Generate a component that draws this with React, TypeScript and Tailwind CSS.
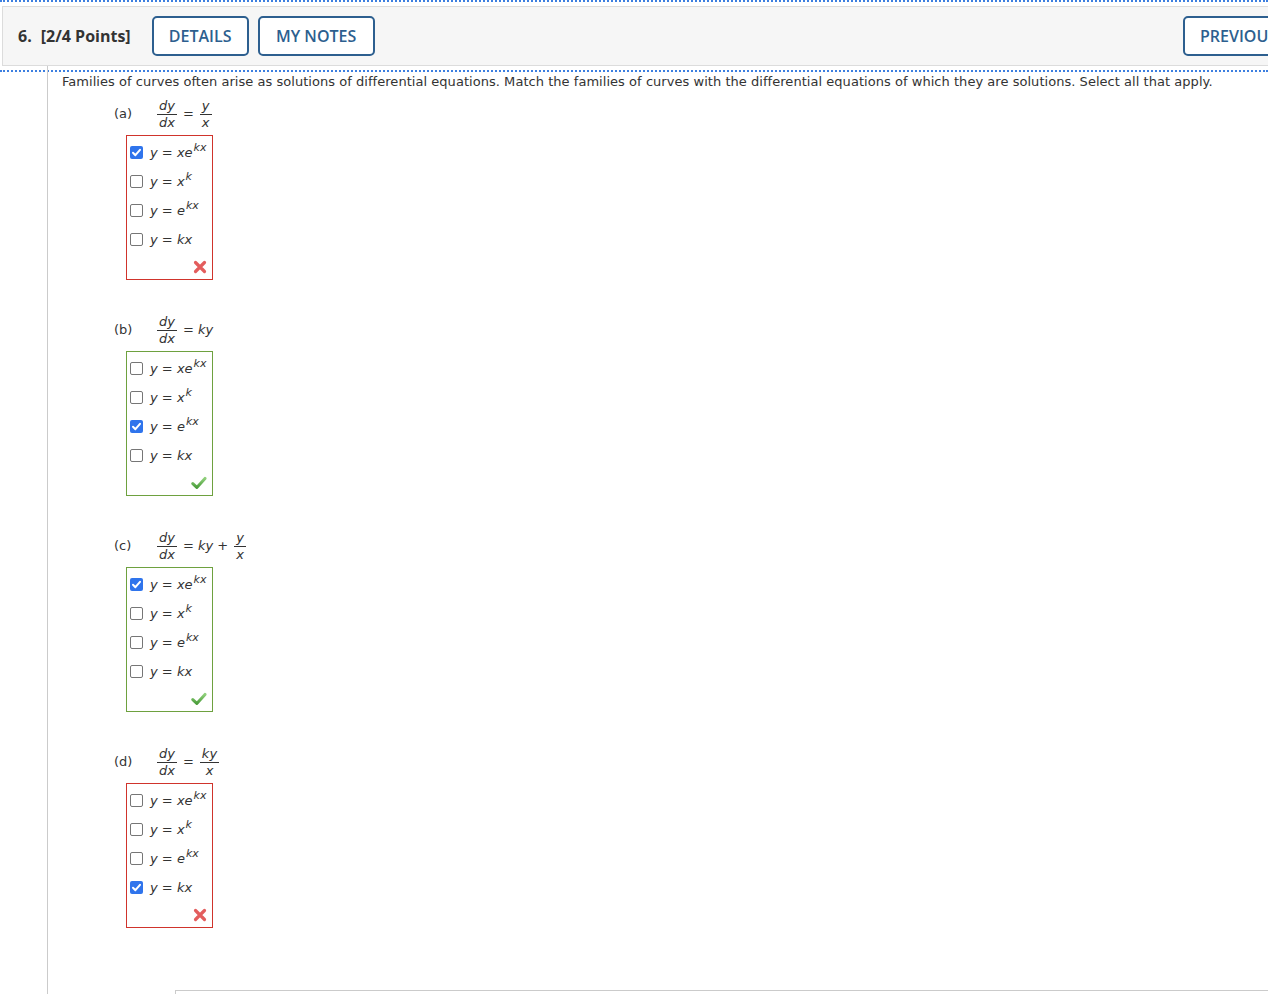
import React from "react";

const mathFont = { fontFamily: '"DejaVu Sans", Verdana, sans-serif' };

function Checkbox({ checked }: { checked: boolean }) {
  if (checked) {
    return (
      <div className="w-[13px] h-[13px] rounded-[2px] bg-[#2f74ec] flex items-center justify-center shrink-0">
        <svg width="11" height="11" viewBox="0 0 11 11">
          <path d="M2 5.8 L4.4 8.2 L9 2.8" stroke="white" strokeWidth="2" fill="none" strokeLinecap="round" strokeLinejoin="round" />
        </svg>
      </div>
    );
  }
  return <div className="w-[13px] h-[13px] rounded-[2px] border border-[#767676] bg-white shrink-0" />;
}

function V({ children }: { children: React.ReactNode }) {
  return <span className="italic">{children}</span>;
}

function Sup({ children }: { children: React.ReactNode }) {
  return <span className="italic text-[11px] relative top-[-6px] ml-[1px]">{children}</span>;
}

const options: React.ReactNode[] = [
  <>
    <V>y</V> = <V>xe</V>
    <Sup>kx</Sup>
  </>,
  <>
    <V>y</V> = <V>x</V>
    <Sup>k</Sup>
  </>,
  <>
    <V>y</V> = <V>e</V>
    <Sup>kx</Sup>
  </>,
  <>
    <V>y</V> = <V>kx</V>
  </>,
];

function Frac({ num, den }: { num: React.ReactNode; den: React.ReactNode }) {
  return (
    <span className="inline-flex flex-col items-center text-[13px] leading-[14px] italic">
      <span className="border-b border-[#333] px-[2px] pb-[1px]">{num}</span>
      <span className="px-[2px] pt-[1px]">{den}</span>
    </span>
  );
}

function Cross() {
  return (
    <svg width="14" height="14" viewBox="0 0 14 14">
      <path d="M2.5 2.5 L11.5 11.5 M11.5 2.5 L2.5 11.5" stroke="#e35d5d" strokeWidth="3.2" strokeLinecap="round" />
    </svg>
  );
}

function Tick() {
  return (
    <svg width="16" height="14" viewBox="0 0 16 14">
      <defs>
        <linearGradient id="g" x1="0" y1="0" x2="0" y2="1">
          <stop offset="0" stopColor="#8fcf7a" />
          <stop offset="1" stopColor="#4c9e3c" />
        </linearGradient>
      </defs>
      <path d="M1.8 7.6 L5.8 11.4 L14 2.4" stroke="url(#g)" strokeWidth="3" fill="none" strokeLinecap="round" strokeLinejoin="round" />
    </svg>
  );
}

function Part({
  label,
  eq,
  checked,
  correct,
}: {
  label: string;
  eq: React.ReactNode;
  checked: number[];
  correct: boolean;
}) {
  return (
    <div className="h-[216px]">
      <div className="h-[34px] flex items-center text-[13px] text-[#333]" style={mathFont}>
        <span className="w-[43px] ml-[52px] not-italic">{label}</span>
        {eq}
      </div>
      <div
        className={
          "mt-[4px] ml-[64px] w-[87px] h-[145px] border flex flex-col " +
          (correct ? "border-[#6ea13f]" : "border-[#d0342c]")
        }
      >
        <div className="pt-[2px]">
          {options.map((o, i) => (
            <div key={i} className="h-[29px] flex items-center pl-[3px]">
              <Checkbox checked={checked.includes(i)} />
              <span className="ml-[7px] text-[13px] text-[#333] whitespace-nowrap" style={mathFont}>
                {o}
              </span>
            </div>
          ))}
        </div>
        <div className="flex-1 flex items-center justify-end pr-[5px]">
          {correct ? <Tick /> : <Cross />}
        </div>
      </div>
    </div>
  );
}

export default function App() {
  const eqA = (
    <span className="flex items-center gap-[6px]">
      <Frac num="dy" den="dx" />
      <span>=</span>
      <Frac num="y" den="x" />
    </span>
  );
  const eqB = (
    <span className="flex items-center gap-[6px]">
      <Frac num="dy" den="dx" />
      <span>
        = <span className="italic">ky</span>
      </span>
    </span>
  );
  const eqC = (
    <span className="flex items-center gap-[6px]">
      <Frac num="dy" den="dx" />
      <span>
        = <span className="italic">ky</span> +
      </span>
      <Frac num="y" den="x" />
    </span>
  );
  const eqD = (
    <span className="flex items-center gap-[6px]">
      <Frac num="dy" den="dx" />
      <span>=</span>
      <Frac num="ky" den="x" />
    </span>
  );

  return (
    <div className="w-[1268px] h-[994px] overflow-hidden bg-white relative">
      <div className="border-t-2 border-b-2 border-dotted border-[#3d7fe0] py-[4px]">
        <div
          className="ml-[2px] h-[60px] bg-[#f6f6f6] border border-r-0 border-[#dcdcdc] flex items-center"
          style={{ fontFamily: '"Open Sans", sans-serif' }}
        >
          <span className="ml-[15px] text-[16px] font-bold text-[#333]">6.</span>
          <span className="ml-[9px] text-[16px] font-bold text-[#333]">[2/4 Points]</span>
          <button className="ml-[21px] h-[40px] w-[97px] border-2 border-[#2d5f8f] rounded-[5px] bg-white text-[16px] font-semibold text-[#2d5f8f]">
            DETAILS
          </button>
          <button className="ml-[9px] h-[40px] w-[117px] border-2 border-[#2d5f8f] rounded-[5px] bg-white text-[16px] font-semibold text-[#2d5f8f]">
            MY NOTES
          </button>
          <div className="flex-1" />
          <button className="mr-[-50px] h-[40px] w-[135px] border-2 border-[#2d5f8f] rounded-[5px] bg-white text-[16px] font-semibold text-[#2d5f8f] text-left pl-[15px] whitespace-nowrap">
            PREVIOUS
          </button>
        </div>
      </div>
      <div className="ml-[47px] border-l-[1.5px] border-[#cbcbcb] h-[940px] mt-[-6px] pt-[6px]">
        <div className="pl-[14px]">
          <p
            className="text-[13px] leading-[16px] tracking-[0.04px] text-[#333] pt-[2px] h-[25px] whitespace-nowrap"
            style={mathFont}
          >
            Families of curves often arise as solutions of differential equations. Match the families of curves with
            the differential equations of which they are solutions. Select all that apply.
          </p>
          <Part label="(a)" eq={eqA} checked={[0]} correct={false} />
          <Part label="(b)" eq={eqB} checked={[2]} correct={true} />
          <Part label="(c)" eq={eqC} checked={[0]} correct={true} />
          <Part label="(d)" eq={eqD} checked={[3]} correct={false} />
          <div className="ml-[113px] mt-[29px] h-[40px] border-t border-l border-[#cbcbcb]" />
        </div>
      </div>
    </div>
  );
}
